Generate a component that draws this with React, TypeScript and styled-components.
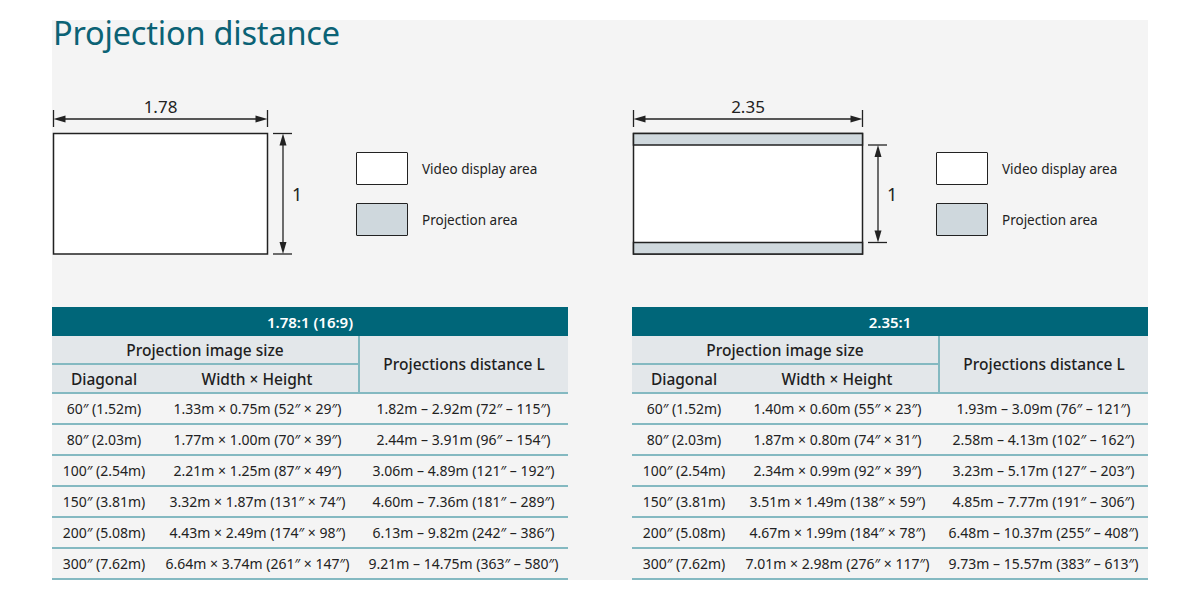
import React from "react";
import styled, { createGlobalStyle } from "styled-components";

const Global = createGlobalStyle`
  html, body { margin: 0; padding: 0; background: #ffffff; }
  body { font-family: "Noto Sans", "Open Sans", sans-serif; color: #222; }
`;

const Page = styled.div`
  padding: 20px 52px 0 52px;
  width: 1096px;
`;

const Panel = styled.section`
  display: flow-root;
  background: #f4f4f4;
  width: 1096px;
`;

const Title = styled.h1`
  margin: -7px 0 0 1px;
  font-size: 32.5px;
  line-height: 40px;
  font-weight: 400;
  color: #0b6275;
  letter-spacing: -0.2px;
`;

const Columns = styled.div`
  display: grid;
  grid-template-columns: 516px 516px;
  column-gap: 64px;
`;

const Column = styled.div`
  display: flex;
  flex-direction: column;
`;

const DiagramRow = styled.div`
  display: flex;
  margin-top: 37px;
  height: 170px;
`;

const DiagramSvg = styled.svg`
  width: 304px;
  height: 170px;
  flex: none;
`;

const Legend = styled.div`
  display: flex;
  flex-direction: column;
  gap: 18px;
  padding-top: 62px;
`;

const LegendItem = styled.div`
  display: flex;
  align-items: center;
  gap: 14px;
`;

const Swatch = styled.span<{ $fill: string }>`
  display: block;
  box-sizing: border-box;
  width: 52px;
  height: 33px;
  border: 1.5px solid #222;
  border-radius: 1px;
  background: ${(p) => p.$fill};
`;

const LegendText = styled.span`
  font-size: 13.5px;
  color: #222;
`;

const Table = styled.table`
  margin-top: 47px;
  width: 516px;
  border-collapse: collapse;
  table-layout: fixed;
`;

const CaptionCell = styled.th`
  background: #006679;
  color: #ffffff;
  font-size: 15px;
  font-weight: 600;
  height: 29px;
  padding: 0;
  text-align: center;
`;

const HeadCell = styled.th<{ $bottom?: boolean; $right?: boolean }>`
  background: #e3e7ea;
  color: #1e1e1e;
  font-size: 15.5px;
  font-weight: 500;
  height: 27px;
  padding: 0;
  text-align: center;
  border-bottom: ${(p) => (p.$bottom ? "2px solid #84b9c1" : "none")};
  border-left: ${(p) => (p.$right ? "2px solid #84b9c1" : "none")};
`;

const Cell = styled.td`
  height: 29px;
  padding: 0;
  text-align: center;
  font-size: 14px;
  color: #222;
  white-space: nowrap;
  border-bottom: 2px solid #84b9c1;
`;

type Row = [string, string, string];

const leftRows: Row[] = [
  ["60″ (1.52m)", "1.33m × 0.75m (52″ × 29″)", "1.82m – 2.92m (72″ – 115″)"],
  ["80″ (2.03m)", "1.77m × 1.00m (70″ × 39″)", "2.44m – 3.91m (96″ – 154″)"],
  ["100″ (2.54m)", "2.21m × 1.25m (87″ × 49″)", "3.06m – 4.89m (121″ – 192″)"],
  ["150″ (3.81m)", "3.32m × 1.87m (131″ × 74″)", "4.60m – 7.36m (181″ – 289″)"],
  ["200″ (5.08m)", "4.43m × 2.49m (174″ × 98″)", "6.13m – 9.82m (242″ – 386″)"],
  ["300″ (7.62m)", "6.64m × 3.74m (261″ × 147″)", "9.21m – 14.75m (363″ – 580″)"],
];

const rightRows: Row[] = [
  ["60″ (1.52m)", "1.40m × 0.60m (55″ × 23″)", "1.93m – 3.09m (76″ – 121″)"],
  ["80″ (2.03m)", "1.87m × 0.80m (74″ × 31″)", "2.58m – 4.13m (102″ – 162″)"],
  ["100″ (2.54m)", "2.34m × 0.99m (92″ × 39″)", "3.23m – 5.17m (127″ – 203″)"],
  ["150″ (3.81m)", "3.51m × 1.49m (138″ × 59″)", "4.85m – 7.77m (191″ – 306″)"],
  ["200″ (5.08m)", "4.67m × 1.99m (184″ × 78″)", "6.48m – 10.37m (255″ – 408″)"],
  ["300″ (7.62m)", "7.01m × 2.98m (276″ × 117″)", "9.73m – 15.57m (383″ – 613″)"],
];

const INK = "#222";
const BAND = "#cfd8dd";

function Diagram({
  rectW,
  label,
  bands,
}: {
  rectW: number;
  label: string;
  bands: boolean;
}) {
  const x0 = 1.5;
  const x1 = x0 + rectW;
  const top = 43.5;
  const bottom = 164;
  const band = 11.5;
  const vTop = bands ? top + band : top;
  const vBottom = bands ? bottom - band : bottom;
  const vx = x1 + 15.5;
  const ay = 29;
  return (
    <DiagramSvg viewBox="0 0 304 170">
      <line x1={x0} y1={20} x2={x0} y2={37} stroke={INK} strokeWidth={1.3} />
      <line x1={x1} y1={20} x2={x1} y2={37} stroke={INK} strokeWidth={1.3} />
      <line x1={x0 + 6} y1={ay} x2={x1 - 6} y2={ay} stroke={INK} strokeWidth={1.3} />
      <polygon points={`${x0},${ay} ${x0 + 12},${ay - 3.5} ${x0 + 12},${ay + 3.5}`} fill={INK} />
      <polygon points={`${x1},${ay} ${x1 - 12},${ay - 3.5} ${x1 - 12},${ay + 3.5}`} fill={INK} />
      <text
        x={(x0 + x1) / 2}
        y={23}
        textAnchor="middle"
        fontSize={17}
        fontFamily="Noto Sans, sans-serif"
        fill={INK}
      >
        {label}
      </text>

      <rect x={x0} y={top} width={rectW} height={bottom - top} fill="#ffffff" stroke={INK} strokeWidth={1.5} />
      {bands && (
        <>
          <rect x={x0} y={top} width={rectW} height={band} fill={BAND} stroke={INK} strokeWidth={1.5} />
          <rect x={x0} y={bottom - band} width={rectW} height={band} fill={BAND} stroke={INK} strokeWidth={1.5} />
        </>
      )}

      <line x1={vx - 10} y1={vTop} x2={vx + 9} y2={vTop} stroke={INK} strokeWidth={1.3} />
      <line x1={vx - 10} y1={vBottom} x2={vx + 9} y2={vBottom} stroke={INK} strokeWidth={1.3} />
      <line x1={vx} y1={vTop + 6} x2={vx} y2={vBottom - 6} stroke={INK} strokeWidth={1.3} />
      <polygon points={`${vx},${vTop} ${vx - 3.5},${vTop + 12} ${vx + 3.5},${vTop + 12}`} fill={INK} />
      <polygon points={`${vx},${vBottom} ${vx - 3.5},${vBottom - 12} ${vx + 3.5},${vBottom - 12}`} fill={INK} />
      <text x={vx + 9} y={111} fontSize={18} fontFamily="Noto Sans, sans-serif" fill={INK}>
        1
      </text>
    </DiagramSvg>
  );
}

function RatioTable({ caption, rows }: { caption: string; rows: Row[] }) {
  return (
    <Table>
      <colgroup>
        <col style={{ width: 104 }} />
        <col style={{ width: 203 }} />
        <col style={{ width: 209 }} />
      </colgroup>
      <thead>
        <tr>
          <CaptionCell colSpan={3}>{caption}</CaptionCell>
        </tr>
        <tr>
          <HeadCell colSpan={2} $bottom>
            Projection image size
          </HeadCell>
          <HeadCell rowSpan={2} $right $bottom>
            Projections distance L
          </HeadCell>
        </tr>
        <tr>
          <HeadCell $bottom>Diagonal</HeadCell>
          <HeadCell $bottom>Width × Height</HeadCell>
        </tr>
      </thead>
      <tbody>
        {rows.map((r) => (
          <tr key={r[0]}>
            <Cell>{r[0]}</Cell>
            <Cell>{r[1]}</Cell>
            <Cell>{r[2]}</Cell>
          </tr>
        ))}
      </tbody>
    </Table>
  );
}

function RatioColumn({
  label,
  rectW,
  bands,
  caption,
  rows,
}: {
  label: string;
  rectW: number;
  bands: boolean;
  caption: string;
  rows: Row[];
}) {
  return (
    <Column>
      <DiagramRow>
        <Diagram rectW={rectW} label={label} bands={bands} />
        <Legend>
          <LegendItem>
            <Swatch $fill="#ffffff" />
            <LegendText>Video display area</LegendText>
          </LegendItem>
          <LegendItem>
            <Swatch $fill={BAND} />
            <LegendText>Projection area</LegendText>
          </LegendItem>
        </Legend>
      </DiagramRow>
      <RatioTable caption={caption} rows={rows} />
    </Column>
  );
}

export default function App() {
  return (
    <>
      <Global />
      <Page>
        <Panel>
          <Title>Projection distance</Title>
          <Columns>
            <RatioColumn label="1.78" rectW={214} bands={false} caption="1.78:1 (16:9)" rows={leftRows} />
            <RatioColumn label="2.35" rectW={229} bands caption="2.35:1" rows={rightRows} />
          </Columns>
        </Panel>
      </Page>
    </>
  );
}
